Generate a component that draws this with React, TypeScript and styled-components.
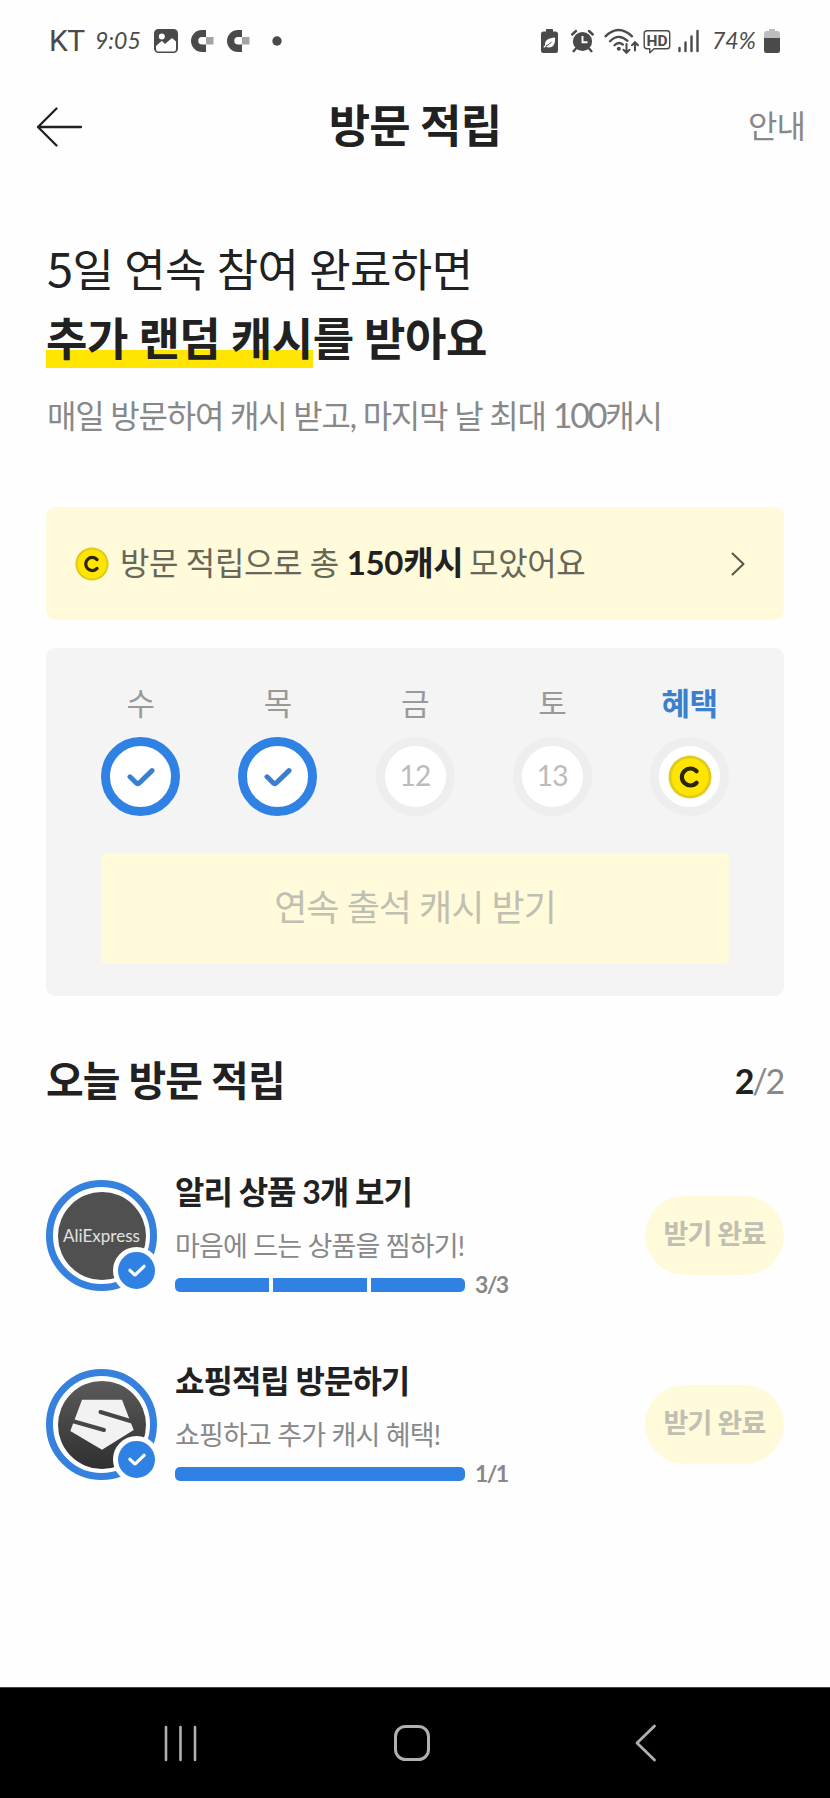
import React from 'react';
import styled, { createGlobalStyle } from 'styled-components';

const GlobalStyle = createGlobalStyle`
  *, *::before, *::after { box-sizing: border-box; }
  html, body { margin: 0; padding: 0; background: #fefefe; }
  body {
    font-family: Lato, "Noto Sans CJK KR", sans-serif;
    color: #212121;
    -webkit-font-smoothing: antialiased;
  }
  h1, h2, h3, p { margin: 0; }
  button { font-family: inherit; border: 0; padding: 0; background: none; }
`;

const Screen = styled.div`
  width: 830px;
  height: 1798px;
  display: flex;
  flex-direction: column;
  background: #fefefe;
  white-space: nowrap;
  overflow: hidden;
`;

const StatusBar = styled.div`
  height: 82px;
  flex: none;
  padding: 0 50px 0 49px;
  display: flex;
  justify-content: space-between;
  align-items: center;
  color: #4a4a4a;
`;

const StatusGroup = styled.div`
  display: flex;
  align-items: center;
`;

const StatusIcon = styled.svg<{ $ml?: number }>`
  display: block;
  flex: none;
  margin-left: ${(p) => p.$ml ?? 0}px;
`;

const Carrier = styled.span`
  font-family: Roboto, sans-serif;
  font-weight: 400;
  font-size: 30px;
  line-height: 36px;
  letter-spacing: -0.5px;
  width: 46px;
`;

const HandText = styled.span<{ $w: number; $ml?: number }>`
  font-style: italic;
  font-size: 23px;
  line-height: 30px;
  padding-bottom: 2px;
  width: ${(p) => p.$w}px;
  margin-left: ${(p) => p.$ml ?? 0}px;
`;

const Header = styled.header`
  height: 88px;
  flex: none;
  display: grid;
  grid-template-columns: 200px 1fr 200px;
  align-items: center;
  padding: 2px 25px 0 36px;
`;

const PageTitle = styled.h1`
  text-align: center;
  font-size: 45px;
  line-height: 66px;
  font-weight: 700;
  letter-spacing: -0.8px;
  padding: 0 11px 3px 0;
`;

const GuideLink = styled.span`
  justify-self: end;
  font-size: 32px;
  line-height: 46px;
  padding-bottom: 2px;
  color: #888;
  letter-spacing: -1px;
`;

const Main = styled.main`
  flex: 1;
  padding: 66px 46px 0;
`;

const Headline = styled.h2<{ $bold?: boolean }>`
  font-size: 45px;
  line-height: 69px;
  height: 69px;
  font-weight: ${(p) => (p.$bold ? 700 : 400)};
  letter-spacing: ${(p) => (p.$bold ? -0.45 : -0.6)}px;
  padding-left: ${(p) => (p.$bold ? 0 : 1)}px;
`;

const DayCount = styled.span`
  font-family: "Noto Sans CJK KR", sans-serif;
  font-size: 47px;
  line-height: 0;
`;

const Marker = styled.span`
  background: linear-gradient(#ffe500, #ffe500) 0 45px / 100% 18px no-repeat;
  display: inline-block;
  height: 69px;
`;

const Lead = styled.p`
  margin-top: 18px;
  height: 48px;
  padding-left: 1px;
  font-size: 32px;
  line-height: 48px;
  color: #888;
  letter-spacing: -1.25px;
`;

const LeadAmount = styled.span`
  font-size: 34px;
  line-height: 0;
  letter-spacing: -2.2px;
`;

const Banner = styled.section`
  margin-top: 67px;
  height: 113px;
  border-radius: 10px;
  background: #fffad9;
  display: flex;
  align-items: center;
  padding: 0 38px 0 29px;
`;

const BannerText = styled.p`
  flex: 1;
  margin-left: 11px;
  font-size: 32px;
  line-height: 48px;
  padding-bottom: 2px;
  color: #666659;
  letter-spacing: -0.4px;

  b {
    margin-right: -2px;
    font-weight: 700;
    font-size: 33px;
    letter-spacing: -0.3px;
    color: #212121;
  }
`;

const WeekCard = styled.section`
  margin-top: 28px;
  height: 348px;
  border-radius: 9px;
  background: #f4f4f4;
  padding: 32px 55px 0;
`;

const Days = styled.div`
  display: flex;
  justify-content: space-between;
`;

const Day = styled.div`
  width: 79px;
  display: flex;
  flex-direction: column;
  align-items: center;
`;

const DayName = styled.span<{ $accent?: boolean }>`
  font-size: 31px;
  line-height: 46px;
  height: 46px;
  letter-spacing: -0.5px;
  font-weight: ${(p) => (p.$accent ? 700 : 400)};
  color: ${(p) => (p.$accent ? '#3a80cf' : '#999')};
`;

const DayRing = styled.div<{ $done?: boolean }>`
  margin-top: 11px;
  width: 79px;
  height: 79px;
  border-radius: 50%;
  border: 9px solid ${(p) => (p.$done ? '#2f82e4' : '#eeeeee')};
  background: #fff;
  display: flex;
  align-items: center;
  justify-content: center;
  color: #bbb;
`;

const DayDate = styled.span`
  font-size: 28px;
  line-height: 34px;
  letter-spacing: -0.8px;
  padding-bottom: 3px;
`;

const ClaimButton = styled.button`
  display: flex;
  align-items: center;
  justify-content: center;
  width: 628px;
  height: 111px;
  margin-top: 37px;
  padding-bottom: 4px;
  border-radius: 5px;
  background: #fffad9;
  color: #bfbfb2;
  font-size: 36px;
  line-height: 54px;
  letter-spacing: -1px;
`;

const SectionHead = styled.div`
  margin-top: 54px;
  height: 62px;
  display: flex;
  justify-content: space-between;
  align-items: center;
`;

const SectionTitle = styled.h2`
  font-size: 41px;
  line-height: 62px;
  font-weight: 700;
  letter-spacing: -0.95px;
`;

const Count = styled.span`
  font-size: 34px;
  line-height: 44px;
  color: #888;
  letter-spacing: -2.2px;
  margin-right: 1px;

  b {
    font-weight: 700;
    color: #212121;
  }
`;

const Missions = styled.ul`
  list-style: none;
  margin: 54px 0 0;
  padding: 0;
`;

const Mission = styled.li`
  height: 189px;
  display: flex;
  align-items: flex-start;
`;

const Avatar = styled.div`
  position: relative;
  width: 111px;
  height: 111px;
  margin-top: 14px;
  border-radius: 50%;
  border: 7px solid #3581dd;
  background: #fff;
  display: flex;
  align-items: center;
  justify-content: center;
`;

const BrandDisc = styled.div<{ $gradient?: boolean }>`
  width: 88px;
  height: 88px;
  border-radius: 50%;
  background: ${(p) => (p.$gradient ? 'linear-gradient(#5a5a5a, #303030)' : '#505050')};
  display: flex;
  align-items: center;
  justify-content: center;
  color: #e2e2e2;
  font-size: 17px;
  line-height: 22px;
`;

const DoneBadge = styled.span`
  position: absolute;
  right: -10px;
  bottom: -10px;
  width: 47px;
  height: 47px;
  border-radius: 50%;
  border: 5px solid #fff;
  background: #2f82e4;
  display: flex;
  align-items: center;
  justify-content: center;
`;

const MissionBody = styled.div`
  margin-left: 18px;
  padding-top: 2px;
  flex: 1;
`;

const MissionTitle = styled.h3`
  height: 48px;
  font-size: 32px;
  line-height: 48px;
  font-weight: 700;
  letter-spacing: -1px;
`;

const MissionDesc = styled.p`
  margin-top: 10px;
  height: 40px;
  font-size: 27px;
  line-height: 40px;
  color: #888;
  letter-spacing: -0.8px;
`;

const ProgressRow = styled.div`
  margin-top: 3px;
  height: 32px;
  display: flex;
  align-items: center;
`;

const Track = styled.div`
  width: 290px;
  height: 14px;
  border-radius: 5px;
  overflow: hidden;
  display: flex;
  gap: 4px;
`;

const Segment = styled.span`
  flex: 1;
  background: #2f82e4;
`;

const ProgressLabel = styled.span`
  margin-left: 10px;
  padding-bottom: 2px;
  font-size: 23px;
  line-height: 32px;
  font-weight: 700;
  letter-spacing: -1.7px;
  color: #888;
`;

const Pill = styled.button`
  margin-top: 30px;
  padding-bottom: 3px;
  width: 139px;
  height: 79px;
  border-radius: 40px;
  background: #fffad9;
  color: #bfbfb2;
  font-size: 27px;
  line-height: 40px;
  font-weight: 700;
  letter-spacing: -0.8px;
`;

const NavBar = styled.nav`
  flex: none;
  height: 111px;
  border-top: 1px solid #444;
  background: #000;
  display: flex;
  justify-content: space-between;
  align-items: center;
  padding: 0 172px 0 163px;
`;

const HomeIcon = styled.svg`
  margin-right: 8px;
`;

function Coin({ size }: { size: number }) {
  return (
    <svg width={size} height={size} viewBox="0 0 44 44">
      <circle cx="22" cy="22" r="21.5" fill="#e0cc1c" />
      <circle cx="22" cy="22" r="18.6" fill="#ffe500" />
      <path d="M28.6 16.2A8.5 8.5 0 1 0 28.6 27.8" fill="none" stroke="#2a2608" strokeWidth="4.2" strokeLinecap="round" />
    </svg>
  );
}

function Check({ width, color, stroke }: { width: number; color: string; stroke: number }) {
  return (
    <svg width={width} height={(width * 20) / 28} viewBox="0 0 28 20">
      <path d="M3 9.8L9.6 16.2Q10.8 17.2 12 16.2L25 3.6" fill="none" stroke={color} strokeWidth={stroke} strokeLinecap="round" strokeLinejoin="round" />
    </svg>
  );
}

function MagnetIcon({ ml }: { ml: number }) {
  return (
    <StatusIcon $ml={ml} width="24" height="24" viewBox="0 0 24 24">
      <path d="M16 1H12A11 11 0 0 0 12 23H16V15.5H12A3.7 3.7 0 0 1 12 8H16Z" fill="#4a4a4a" />
      <rect x="16" y="8" width="7.5" height="7.5" fill="#a3a3a3" />
    </StatusIcon>
  );
}

function SystemStatus() {
  return (
    <StatusBar>
      <StatusGroup>
        <Carrier>KT</Carrier>
        <HandText $w={59}>9:05</HandText>
        <StatusIcon width="24" height="24" viewBox="0 0 24 24">
          <rect width="24" height="24" rx="4.5" fill="#4a4a4a" />
          <path d="M2 17L7 12.6Q7.8 12 8.6 12.6L11 15L17 9.7Q18 9 19 9.7L22 12.5V20Q22 22.5 19.8 22.5H4.4Q2 22.5 2 20Z" fill="#fefefe" />
          <circle cx="7.8" cy="7.4" r="3" fill="#fefefe" />
        </StatusIcon>
        <MagnetIcon ml={12} />
        <MagnetIcon ml={12} />
        <StatusIcon $ml={22} width="10" height="10" viewBox="0 0 10 10">
          <circle cx="5" cy="5" r="4.7" fill="#4a4a4a" />
        </StatusIcon>
      </StatusGroup>
      <StatusGroup>
        <StatusIcon width="17" height="24" viewBox="0 0 17 24">
          <path d="M5.5 0H11.5Q12 0 12 1V2.5H14.5Q17 2.5 17 5V21.5Q17 24 14.5 24H2.5Q0 24 0 21.5V5Q0 2.5 2.5 2.5H5V1Q5 0 5.5 0Z" fill="#4a4a4a" />
          <path d="M14 8.5C14.5 14.5 12.5 18.5 8 18.5Q5.8 18.5 5 17.2Q4.2 18.2 3 18.7L2.5 17.5Q3.5 17 4 16C3.6 11 8 9 14 8.5Z" fill="#fefefe" />
          <path d="M5 16.8Q8.5 15.8 10.5 12.8" stroke="#4a4a4a" strokeWidth="1" fill="none" />
        </StatusIcon>
        <StatusIcon $ml={13} width="23" height="24" viewBox="0 0 23 24">
          <circle cx="11.5" cy="12.5" r="9.6" fill="#4a4a4a" />
          <path d="M1.2 5.5L5 2M21.8 5.5L18 2M4.5 20L2.6 22.2M18.5 20L20.4 22.2" stroke="#4a4a4a" strokeWidth="2.4" strokeLinecap="round" />
          <path d="M11.5 7V13.2H16.5" stroke="#fefefe" strokeWidth="1.9" fill="none" />
        </StatusIcon>
        <StatusIcon $ml={10} width="35" height="26" viewBox="0 0 35 26">
          <g fill="none" stroke="#4a4a4a" strokeWidth="2.3" strokeLinecap="round">
            <path d="M1.5 8.3Q14.5 -4.3 28 8.3" />
            <path d="M6 13.2Q14.5 4.8 23.5 12.8" />
            <path d="M10.5 17.2Q14.5 13.3 18.8 16.5" />
            <path d="M22.5 16V24.5M19.5 21.8L22.5 24.8L25.5 21.8M31 22.5V14.5M28 17.3L31 14.2L34 17.3" strokeWidth="2" />
          </g>
          <circle cx="14.8" cy="20.8" r="2" fill="#4a4a4a" />
        </StatusIcon>
        <StatusIcon $ml={4} width="28" height="25" viewBox="0 0 28 25">
          <path d="M4 1.8H24Q26.7 1.8 26.7 4.5V17Q26.7 19.8 24 19.8H11L6.8 23.8V19.8H4Q1.2 19.8 1.2 17V4.5Q1.2 1.8 4 1.8Z" fill="none" stroke="#4a4a4a" strokeWidth="1.4" strokeLinejoin="round" />
          <text x="14" y="16.5" textAnchor="middle" fontFamily="Roboto, sans-serif" fontWeight="700" fontSize="15.5" fill="#4a4a4a">HD</text>
        </StatusIcon>
        <StatusIcon $ml={7} width="22" height="24" viewBox="0 0 22 24">
          <path d="M1.5 19V22M7.5 13.5V22M13.5 7.5V22M19.5 2V22" stroke="#4a4a4a" strokeWidth="2.4" strokeLinecap="round" />
        </StatusIcon>
        <HandText $ml={12} $w={52}>74%</HandText>
        <StatusIcon width="16" height="24" viewBox="0 0 16 24">
          <path d="M5 0H11V2H14Q16 2 16 4.5V9H0V4.5Q0 2 2 2H5Z" fill="#bdbdbd" />
          <path d="M0 9H16V21.5Q16 24 13.5 24H2.5Q0 24 0 21.5Z" fill="#4a4a4a" />
        </StatusIcon>
      </StatusGroup>
    </StatusBar>
  );
}

const days = [
  { name: '수', done: true },
  { name: '목', done: true },
  { name: '금', date: '12' },
  { name: '토', date: '13' },
  { name: '혜택', reward: true },
];

const missions = [
  { title: '알리 상품 3개 보기', desc: '마음에 드는 상품을 찜하기!', steps: 3, brand: 'ali' },
  { title: '쇼핑적립 방문하기', desc: '쇼핑하고 추가 캐시 혜택!', steps: 1, brand: 'shop' },
];

export default function App() {
  return (
    <Screen>
      <GlobalStyle />
      <SystemStatus />
      <Header>
        <svg width="47" height="40" viewBox="0 0 47 40" fill="none" stroke="#212121" strokeWidth="2.3" strokeLinecap="round" strokeLinejoin="round">
          <path d="M45 20H2M20.5 1.5L2 20L20.5 38.5" />
        </svg>
        <PageTitle>방문 적립</PageTitle>
        <GuideLink>안내</GuideLink>
      </Header>
      <Main>
        <Headline>
          <DayCount>5</DayCount>일 연속 참여 완료하면
        </Headline>
        <Headline $bold>
          <Marker>추가 랜덤 캐시</Marker>를 받아요
        </Headline>
        <Lead>
          매일 방문하여 캐시 받고, 마지막 날 최대 <LeadAmount>100</LeadAmount>캐시
        </Lead>

        <Banner>
          <Coin size={34} />
          <BannerText>
            방문 적립으로 총 <b>150캐시</b> 모았어요
          </BannerText>
          <svg width="16" height="24" viewBox="0 0 16 24" fill="none" stroke="#55554c" strokeWidth="2" strokeLinecap="round" strokeLinejoin="round">
            <path d="M2.5 1.5L13.5 12L2.5 22.5" />
          </svg>
        </Banner>

        <WeekCard>
          <Days>
            {days.map((d) => (
              <Day key={d.name}>
                <DayName $accent={d.reward}>{d.name}</DayName>
                <DayRing $done={d.done}>
                  {d.done && <Check width={28} color="#3a7fcd" stroke={5} />}
                  {d.date && <DayDate>{d.date}</DayDate>}
                  {d.reward && <Coin size={44} />}
                </DayRing>
              </Day>
            ))}
          </Days>
          <ClaimButton>연속 출석 캐시 받기</ClaimButton>
        </WeekCard>

        <SectionHead>
          <SectionTitle>오늘 방문 적립</SectionTitle>
          <Count>
            <b>2</b>/2
          </Count>
        </SectionHead>

        <Missions>
          {missions.map((m) => (
            <Mission key={m.brand}>
              <Avatar>
                <BrandDisc $gradient={m.brand === 'shop'}>
                  {m.brand === 'ali' ? (
                    'AliExpress'
                  ) : (
                    <svg width="88" height="88" viewBox="0 0 88 88">
                      <path d="M24 18.7H64L75.7 49L44 68.7L12.3 50Z" fill="#f2f2f2" />
                      <path d="M42.5 31L79 42M9 38.5L46 49" stroke="#464646" strokeWidth="4" strokeLinecap="round" />
                    </svg>
                  )}
                </BrandDisc>
                <DoneBadge>
                  <Check width={18} color="#fff" stroke={5} />
                </DoneBadge>
              </Avatar>
              <MissionBody>
                <MissionTitle>{m.title}</MissionTitle>
                <MissionDesc>{m.desc}</MissionDesc>
                <ProgressRow>
                  <Track>
                    {Array.from({ length: m.steps }, (_, i) => (
                      <Segment key={i} />
                    ))}
                  </Track>
                  <ProgressLabel>
                    {m.steps}/{m.steps}
                  </ProgressLabel>
                </ProgressRow>
              </MissionBody>
              <Pill>받기 완료</Pill>
            </Mission>
          ))}
        </Missions>
      </Main>
      <NavBar>
        <svg width="35" height="38" viewBox="0 0 35 38" stroke="#b0b0b0" strokeWidth="2.6" strokeLinecap="round">
          <path d="M3 3V36M17.5 3V36M32 3V36" />
        </svg>
        <HomeIcon width="38" height="38" viewBox="0 0 38 38" fill="none" stroke="#b0b0b0" strokeWidth="3">
          <rect x="2.5" y="2.5" width="33" height="33" rx="10" />
        </HomeIcon>
        <svg width="24" height="38" viewBox="0 0 24 38" fill="none" stroke="#b0b0b0" strokeWidth="2.8" strokeLinecap="round" strokeLinejoin="round">
          <path d="M20.5 2L3 19L20.5 36" />
        </svg>
      </NavBar>
    </Screen>
  );
}
